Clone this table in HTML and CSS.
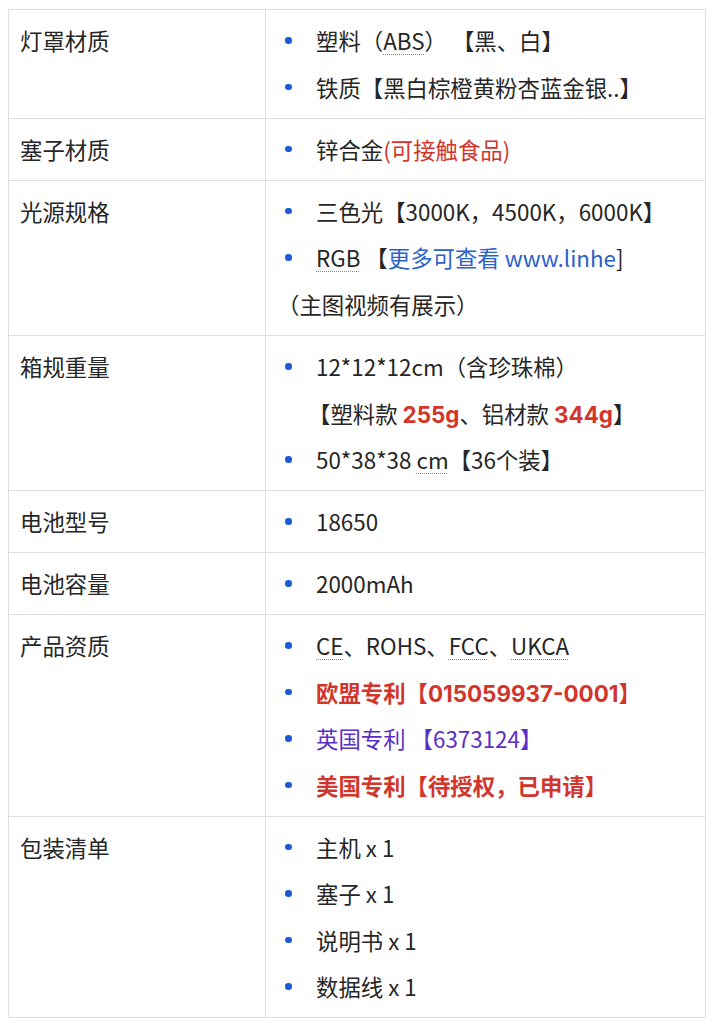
FILE: index.html
```html
<!DOCTYPE html>
<html lang="zh-CN">
<head>
<meta charset="utf-8">
<title>产品参数</title>
<link rel="stylesheet" href="styles.css">
</head>
<body>
<table class="spec">
  <colgroup><col class="c-key"><col class="c-val"></colgroup>
  <tr>
    <td class="key">灯罩材质</td>
    <td class="val"><ul><li>塑料（<span class="dot">ABS</span>） 【黑、白】</li><li>铁质【黑白棕橙黄粉杏蓝金银..】</li></ul></td>
  </tr>
  <tr>
    <td class="key">塞子材质</td>
    <td class="val"><ul><li>锌合金<span class="red">(可接触食品)</span></li></ul></td>
  </tr>
  <tr>
    <td class="key">光源规格</td>
    <td class="val"><ul><li>三色光【3000K，4500K，6000K】</li><li><span class="dot">RGB</span> 【<span class="link">更多可查看 www.linhe</span>]</li></ul><p>（主图视频有展示）</p></td>
  </tr>
  <tr>
    <td class="key">箱规重量</td>
    <td class="val"><ul><li>12*12*12cm（含珍珠棉）<br><span class="pull">【</span>塑料款 <b class="red">255g</b>、铝材款 <b class="red">344g</b>】</li><li>50*38*38 <span class="dot">cm</span>【36个装】</li></ul></td>
  </tr>
  <tr>
    <td class="key">电池型号</td>
    <td class="val"><ul><li>18650</li></ul></td>
  </tr>
  <tr>
    <td class="key">电池容量</td>
    <td class="val"><ul><li>2000mAh</li></ul></td>
  </tr>
  <tr>
    <td class="key">产品资质</td>
    <td class="val"><ul><li><span class="dot">CE</span>、ROHS、<span class="dot">FCC</span>、<span class="dot">UKCA</span></li><li><b class="red">欧盟专利【015059937-0001】</b></li><li class="purple">英国专利 【6373124】</li><li><b class="red">美国专利【待授权，已申请】</b></li></ul></td>
  </tr>
  <tr>
    <td class="key">包装清单</td>
    <td class="val"><ul><li>主机 x 1</li><li>塞子 x 1</li><li>说明书 x 1</li><li>数据线 x 1</li></ul></td>
  </tr>
</table>
</body>
</html>
```
FILE: styles.css
```css
html, body {
  background: #ffffff;
}
body {
  margin: 9px 8px 8px;
  font-family: "Noto Sans CJK SC", "Noto Sans", sans-serif;
  font-size: 22.4px;
  color: #262626;
}
.spec {
  width: 100%;
  border-collapse: collapse;
  table-layout: fixed;
}
.c-key {
  width: 257px;
}
.spec td {
  border: 1px solid #dedede;
  padding: 7.3px 11px;
  vertical-align: top;
  line-height: 46.5px;
}
.spec ul {
  margin: 0;
  padding-left: 39px;
  list-style: none;
}
.spec li {
  position: relative;
}
.spec li::before {
  content: "";
  position: absolute;
  left: -31px;
  top: 20px;
  width: 6.5px;
  height: 6.5px;
  border-radius: 50%;
  background: #1c5bd8;
}
.spec p {
  margin: 0;
}
.pull {
  margin-left: -8px;
}
.dot {
  text-decoration: underline dotted #8a8a8a;
  text-decoration-thickness: 1px;
  text-underline-offset: 4px;
}
.red {
  color: #d1352b;
}
.spec b.red {
  font-family: Inter, "Noto Sans CJK SC", sans-serif;
  font-weight: 700;
  line-height: 1;
}
.link {
  color: #2a62c9;
}
.purple {
  color: #5a2fc6;
}
```
